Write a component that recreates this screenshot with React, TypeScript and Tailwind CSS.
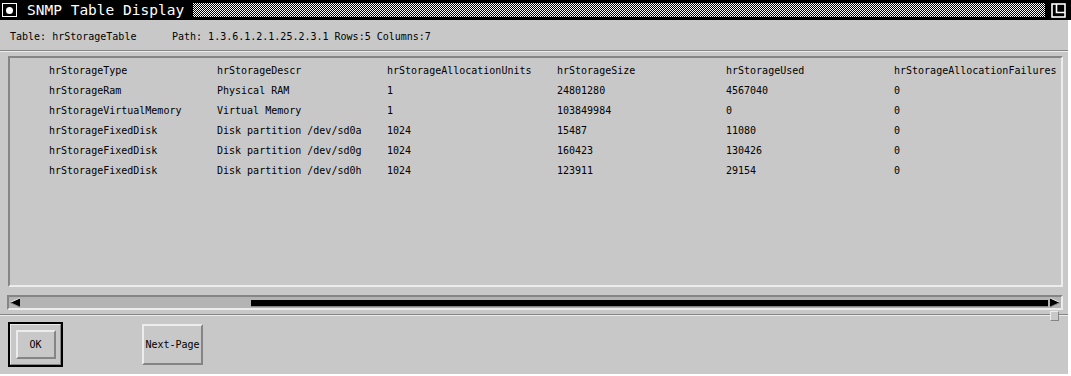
const rows: string[][] = [
  ['hrStorageType', 'hrStorageDescr', 'hrStorageAllocationUnits', 'hrStorageSize', 'hrStorageUsed', 'hrStorageAllocationFailures'],
  ['hrStorageRam', 'Physical RAM', '1', '24801280', '4567040', '0'],
  ['hrStorageVirtualMemory', 'Virtual Memory', '1', '103849984', '0', '0'],
  ['hrStorageFixedDisk', 'Disk partition /dev/sd0a', '1024', '15487', '11080', '0'],
  ['hrStorageFixedDisk', 'Disk partition /dev/sd0g', '1024', '160423', '130426', '0'],
  ['hrStorageFixedDisk', 'Disk partition /dev/sd0h', '1024', '123911', '29154', '0'],
];

// 1px dither band of the title bar, built from alternating striped rows
function Dither() {
  return (
    <div className="w-[852px] h-[14px] flex flex-col">
      {Array.from({ length: 14 }).map((_, i) => (
        <div
          key={i}
          className={
            i % 2 === 0
              ? 'h-[1px] bg-[repeating-linear-gradient(90deg,#ffffff_0px,#ffffff_1px,#000000_1px,#000000_2px)]'
              : 'h-[1px] bg-[repeating-linear-gradient(90deg,#000000_0px,#000000_1px,#ffffff_1px,#ffffff_2px)]'
          }
        />
      ))}
    </div>
  );
}

function TitleBar() {
  return (
    <div className="h-[20px] w-full bg-black flex items-center">
      {/* window menu button */}
      <div className="ml-[2px] w-[15px] h-[14px] border-[1.5px] border-white flex items-center justify-center">
        <div className="w-[7px] h-[7px] rounded-full bg-white" />
      </div>
      <span className="ml-[10px] w-[166px] text-white text-[14.5px] leading-none font-['DejaVu_Sans_Mono',monospace] whitespace-nowrap">
        SNMP Table Display
      </span>
      <Dither />
      <svg className="ml-[6px]" width="15" height="15" viewBox="0 0 15 15">
        <rect x="1" y="1" width="13" height="13" fill="none" stroke="#fff" strokeWidth="1.6" />
        <path d="M5.5 1 V9.5 H14" fill="none" stroke="#fff" strokeWidth="1.6" />
      </svg>
    </div>
  );
}

function ArrowLeft() {
  return (
    <svg width="12" height="11" viewBox="0 0 12 11">
      <polygon points="1,5.5 11,1 11,10" fill="#000" />
      <line x1="1" y1="5.5" x2="11" y2="1" stroke="#e8e8e8" strokeWidth="1" />
      <line x1="1" y1="5.5" x2="11" y2="10" stroke="#858585" strokeWidth="1" />
    </svg>
  );
}

function ArrowRight() {
  return (
    <svg width="12" height="11" viewBox="0 0 12 11">
      <polygon points="11,5.5 1,1 1,10" fill="#000" />
      <line x1="1" y1="1" x2="11" y2="5.5" stroke="#e8e8e8" strokeWidth="1" />
      <line x1="1" y1="10" x2="11" y2="5.5" stroke="#858585" strokeWidth="1" />
    </svg>
  );
}

export default function App() {
  return (
    <div className="w-[1071px] h-[376px] bg-white font-['DejaVu_Sans_Mono',monospace] text-black overflow-hidden">
      <TitleBar />
      <div className="w-[1068px] h-[354px] bg-[#c8c8c8] flex flex-col relative">
        {/* info line */}
        <div className="h-[30px] pt-[4px] pl-[10px] flex items-center text-[10px] leading-none">
          <span className="w-[162px]">Table: hrStorageTable</span>
          <span>Path: 1.3.6.1.2.1.25.2.3.1 Rows:5 Columns:7</span>
        </div>
        <div className="h-[1px] bg-[#858585]" />
        <div className="h-[1px] bg-[#ececec]" />

        {/* table frame */}
        <div className="mt-[4px] ml-[8px] w-[1055px] h-[231px] border-2 border-t-[#858585] border-l-[#858585] border-b-[#ececec] border-r-[#ececec] pt-[3px] pl-[39px]">
          {rows.map((r, i) => (
            <div key={i} className="h-[20px] grid grid-cols-[168px_170px_170px_169px_168px_1fr] items-center text-[10px] leading-none whitespace-nowrap">
              {r.map((c, j) => (
                <span key={j}>{c}</span>
              ))}
            </div>
          ))}
        </div>

        {/* horizontal scrollbar */}
        <div className="mt-[8px] ml-[7px] w-[1056px] h-[15px] border-2 border-t-[#858585] border-l-[#858585] border-b-[#ececec] border-r-[#ececec] bg-[#b4b4b4] flex items-center">
          <ArrowLeft />
          <div className="ml-[230px] w-[797px] h-[9px] border-t-2 border-t-[#b4b4b4] border-b border-b-[#858585] bg-black" />
          <div className="ml-[1px]">
            <ArrowRight />
          </div>
        </div>

        {/* pane separator */}
        <div className="mt-[4px] h-[1px] bg-[#858585]" />
        <div className="h-[1px] bg-[#ececec]" />
        <div className="absolute left-[1050px] top-[291px] w-[9px] h-[10px] bg-[#c8c8c8] border border-t-[#ececec] border-l-[#ececec] border-b-[#858585] border-r-[#858585]" />

        {/* buttons */}
        <div className="flex items-start pt-[6px] pl-[8px] text-[10px] leading-none">
          <div className="w-[55px] h-[45px] border-2 border-black">
            <div className="w-full h-full border border-t-[#ececec] border-l-[#ececec] border-b-[#858585] border-r-[#858585] flex items-center justify-center">
              <button className="w-[40px] h-[29px] border-2 border-t-[#ececec] border-l-[#ececec] border-b-[#858585] border-r-[#858585] bg-[#c8c8c8] flex items-center justify-center">
                OK
              </button>
            </div>
          </div>
          <button className="ml-[79px] mt-[2px] w-[61px] h-[41px] border-2 border-t-[#ececec] border-l-[#ececec] border-b-[#858585] border-r-[#858585] bg-[#c8c8c8] flex items-center justify-center">
            Next-Page
          </button>
        </div>
      </div>
    </div>
  );
}
